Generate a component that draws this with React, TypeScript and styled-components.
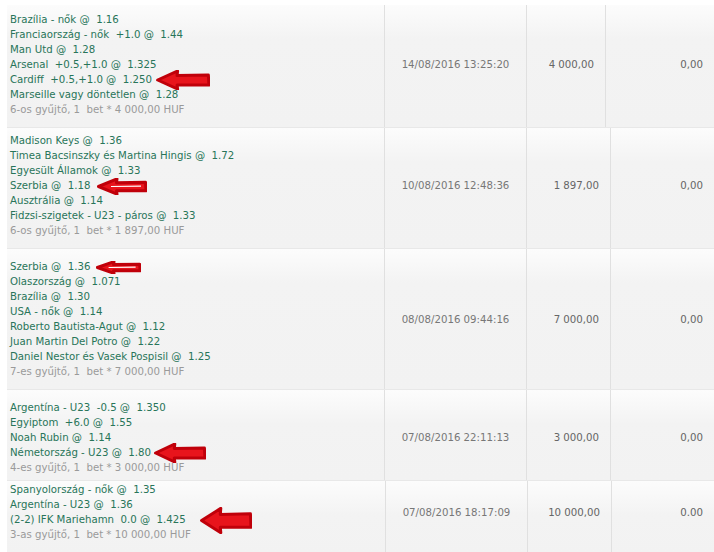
import { FC } from "react";
import styled, { createGlobalStyle } from "styled-components";

interface IArrow {
  w: number;
  h: number;
  gap: number;
  streak?: boolean;
}

interface IBet {
  lines: string[];
  arrowAt: number;
  arrow: IArrow;
  footer: string;
  date: string;
  amount: string;
  result: string;
  cols: string;
  padTop: number;
  padBottom: number;
}

const bets: IBet[] = [
  {
    lines: [
      "Brazília - nők @  1.16",
      "Franciaország - nők  +1.0 @  1.44",
      "Man Utd @  1.28",
      "Arsenal  +0.5,+1.0 @  1.325",
      "Cardiff  +0.5,+1.0 @  1.250",
      "Marseille vagy döntetlen @  1.28",
    ],
    arrowAt: 4,
    arrow: { w: 54, h: 20, gap: 4 },
    footer: "6-os gyűjtő, 1  bet * 4 000,00 HUF",
    date: "14/08/2016 13:25:20",
    amount: "4 000,00",
    result: "0,00",
    cols: "378px 142px 79px 1fr",
    padTop: 7,
    padBottom: 10,
  },
  {
    lines: [
      "Madison Keys @  1.36",
      "Timea Bacsinszky és Martina Hingis @  1.72",
      "Egyesült Államok @  1.33",
      "Szerbia @  1.18",
      "Ausztrália @  1.14",
      "Fidzsi-szigetek - U23 - páros @  1.33",
    ],
    arrowAt: 3,
    arrow: { w: 50, h: 17, gap: 7, streak: true },
    footer: "6-os gyűjtő, 1  bet * 1 897,00 HUF",
    date: "10/08/2016 12:48:36",
    amount: "1 897,00",
    result: "0,00",
    cols: "378px 142px 84px 1fr",
    padTop: 5,
    padBottom: 10,
  },
  {
    lines: [
      "Szerbia @  1.36",
      "Olaszország @  1.071",
      "Brazília @  1.30",
      "USA - nők @  1.14",
      "Roberto Bautista-Agut @  1.12",
      "Juan Martin Del Potro @  1.22",
      "Daniel Nestor és Vasek Pospisil @  1.25",
    ],
    arrowAt: 0,
    arrow: { w: 45, h: 13, gap: 6, streak: true },
    footer: "7-es gyűjtő, 1  bet * 7 000,00 HUF",
    date: "08/08/2016 09:44:16",
    amount: "7 000,00",
    result: "0,00",
    cols: "378px 142px 84px 1fr",
    padTop: 10,
    padBottom: 10,
  },
  {
    lines: [
      "Argentína - U23  -0.5 @  1.350",
      "Egyiptom  +6.0 @  1.55",
      "Noah Rubin @  1.14",
      "Németország - U23 @  1.80",
    ],
    arrowAt: 3,
    arrow: { w: 52, h: 20, gap: 3 },
    footer: "4-es gyűjtő, 1  bet * 3 000,00 HUF",
    date: "07/08/2016 22:11:13",
    amount: "3 000,00",
    result: "0,00",
    cols: "378px 142px 84px 1fr",
    padTop: 10,
    padBottom: 5,
  },
  {
    lines: [
      "Spanyolország - nők @  1.35",
      "Argentína - U23 @  1.36",
      "(2-2) IFK Mariehamn  0.0 @  1.425",
    ],
    arrowAt: 2,
    arrow: { w: 52, h: 27, gap: 14 },
    footer: "3-as gyűjtő, 1  bet * 10 000,00 HUF",
    date: "07/08/2016 18:17:09",
    amount: "10 000,00",
    result: "0.00",
    cols: "379px 142px 84px 1fr",
    padTop: 1,
    padBottom: 12,
  },
];

const RedArrow: FC<IArrow> = ({ w, h, gap, streak }) => (
  <ArrowSvg
    $w={w}
    $h={h}
    $gap={gap}
    viewBox="0 0 100 40"
    preserveAspectRatio="none"
  >
    <path
      d="M3 20 L40 2 L39 11 L97 10 L98 30 L39 30 L40 38 Z"
      fill="#e8141c"
      stroke="#c0000a"
      strokeWidth="3"
      strokeLinejoin="round"
      vectorEffect="non-scaling-stroke"
    />
    {streak && (
      <path
        d="M28 20 L88 19"
        stroke="#fff"
        strokeWidth="1.2"
        vectorEffect="non-scaling-stroke"
      />
    )}
  </ArrowSvg>
);

const BetRow: FC<{ bet: IBet }> = ({ bet }) => (
  <Row $cols={bet.cols}>
    <Cell $padTop={bet.padTop} $padBottom={bet.padBottom}>
      <Selections>
        {bet.lines.map((line, i) => (
          <Selection key={i}>
            {line}
            {i === bet.arrowAt && <RedArrow {...bet.arrow} />}
          </Selection>
        ))}
        <Footer>{bet.footer}</Footer>
      </Selections>
    </Cell>
    <Cell $padTop={bet.padTop} $padBottom={bet.padBottom} $align="center">
      <DateText>{bet.date}</DateText>
    </Cell>
    <Cell $padTop={bet.padTop} $padBottom={bet.padBottom} $align="flex-end">
      <Amount>{bet.amount}</Amount>
    </Cell>
    <Cell $padTop={bet.padTop} $padBottom={bet.padBottom} $align="flex-end">
      <Amount>{bet.result}</Amount>
    </Cell>
  </Row>
);

const App: FC = () => (
  <>
    <GlobalStyle />
    <Table>
      {bets.map((bet) => (
        <BetRow key={bet.date} bet={bet} />
      ))}
    </Table>
  </>
);

const GlobalStyle = createGlobalStyle`
  html, body {
    margin: 0;
    padding: 0;
    background: #fff;
    overflow: hidden;
  }

  body {
    font-family: "DejaVu Sans", Verdana, sans-serif;
    font-size: 10.2px;
  }
`;

const Table = styled.div`
  padding: 5px 0 0 7px;
  width: 707px;
`;

const Row = styled.div<{ $cols: string }>`
  display: grid;
  grid-template-columns: ${(props) => props.$cols};
  border-top: 1px solid #e8e8e8;
  background: linear-gradient(to bottom, #fcfcfc 0, #f3f3f3 34px, #f2f2f2 100%);

  &:first-child {
    border-top: none;
  }
`;

const Cell = styled.div<{
  $padTop: number;
  $padBottom: number;
  $align?: string;
}>`
  display: flex;
  align-items: center;
  justify-content: ${(props) => props.$align || "flex-start"};
  padding: ${(props) => props.$padTop}px 11px ${(props) => props.$padBottom}px 3px;
  border-right: 1px solid #e0e0e0;

  &:last-child {
    border-right: none;
  }
`;

const Selections = styled.div`
  display: flex;
  flex-direction: column;
  align-self: flex-start;
`;

const Selection = styled.div`
  color: #287559;
  line-height: 15px;
  white-space: pre;
`;

const Footer = styled.div`
  color: #9a9a9a;
  line-height: 15px;
  white-space: pre;
`;

const DateText = styled.span`
  color: #777;
  white-space: pre;
  margin-left: 8px;
`;

const Amount = styled.span`
  color: #666;
  white-space: pre;
`;

const ArrowSvg = styled.svg<{ $w: number; $h: number; $gap: number }>`
  display: inline-block;
  vertical-align: middle;
  width: ${(props) => props.$w}px;
  height: ${(props) => props.$h}px;
  margin: ${(props) => -(props.$h - 10) / 2}px 0 ${(props) => -(props.$h - 10) / 2}px
    ${(props) => props.$gap}px;
`;

export default App;
